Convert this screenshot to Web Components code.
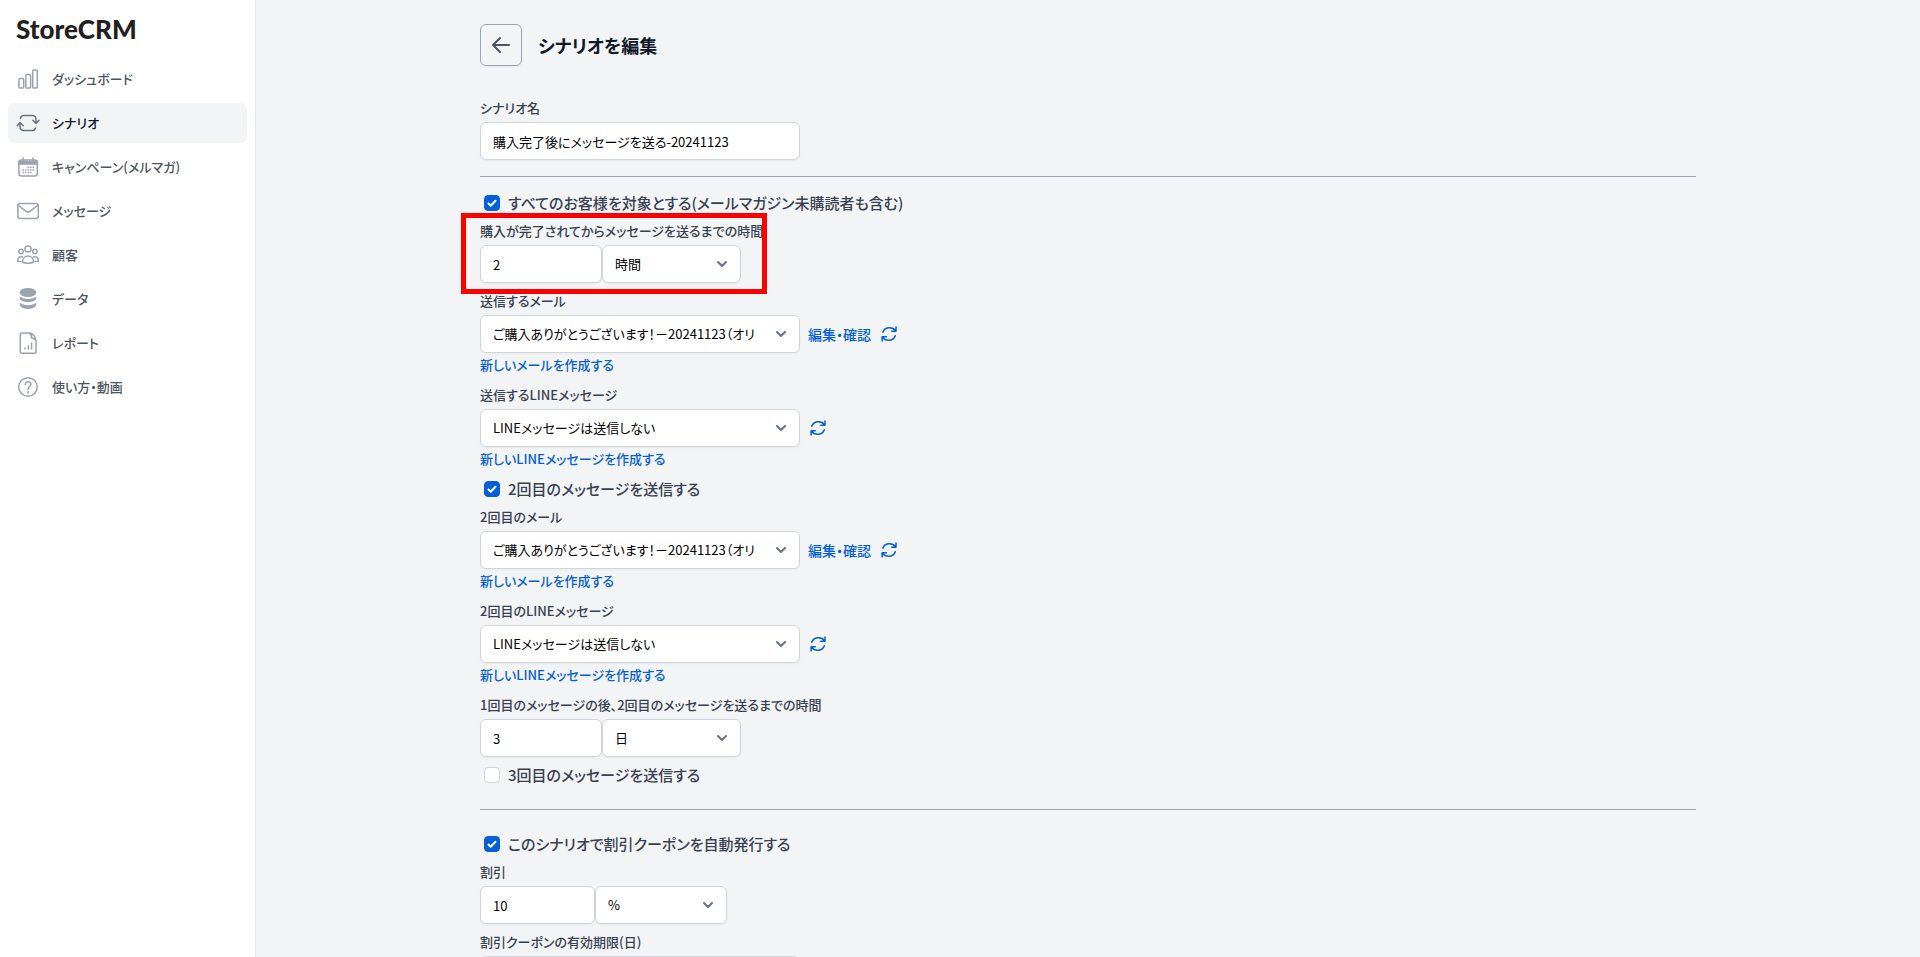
<!DOCTYPE html>
<html lang="ja">
<head>
<meta charset="utf-8">
<meta name="viewport" content="width=device-width, initial-scale=1">
<title>シナリオを編集 | StoreCRM</title>
<style>
  body {
    margin: 0;
    background: #f3f4f6;
    color: #374151;
    font-family: "Noto Sans CJK JP", sans-serif;
    font-size: 13px;
    line-height: 20px;
    font-feature-settings: "palt";
  }
</style>
</head>
<body>
<crm-app>
  <crm-sidebar slot="sidebar">
    <crm-nav-item icon="chart">ダッシュボード</crm-nav-item>
    <crm-nav-item icon="cycle" active>シナリオ</crm-nav-item>
    <crm-nav-item icon="calendar">キャンペーン(メルマガ)</crm-nav-item>
    <crm-nav-item icon="mail">メッセージ</crm-nav-item>
    <crm-nav-item icon="people">顧客</crm-nav-item>
    <crm-nav-item icon="data">データ</crm-nav-item>
    <crm-nav-item icon="report">レポート</crm-nav-item>
    <crm-nav-item icon="help">使い方・動画</crm-nav-item>
  </crm-sidebar>

  <crm-page-header>シナリオを編集</crm-page-header>
  <crm-section>
    <crm-text-field label="シナリオ名" value="購入完了後にメッセージを送る-20241123"></crm-text-field>
  </crm-section>
  <crm-section class="first">
    <crm-check label="すべてのお客様を対象とする(メールマガジン未購読者も含む)" checked></crm-check>
    <crm-highlight>
      <crm-amount-field label="購入が完了されてからメッセージを送るまでの時間" value="2" unit="時間"></crm-amount-field>
    </crm-highlight>
    <crm-message-field label="送信するメール" value="ご購入ありがとうございます！－20241123（オリ" edit="編集・確認" create="新しいメールを作成する"></crm-message-field>
    <crm-message-field label="送信するLINEメッセージ" value="LINEメッセージは送信しない" create="新しいLINEメッセージを作成する"></crm-message-field>
    <crm-check label="2回目のメッセージを送信する" checked></crm-check>
    <crm-message-field label="2回目のメール" value="ご購入ありがとうございます！－20241123（オリ" edit="編集・確認" create="新しいメールを作成する"></crm-message-field>
    <crm-message-field label="2回目のLINEメッセージ" value="LINEメッセージは送信しない" create="新しいLINEメッセージを作成する"></crm-message-field>
    <crm-amount-field label="1回目のメッセージの後、2回目のメッセージを送るまでの時間" value="3" unit="日"></crm-amount-field>
    <crm-check label="3回目のメッセージを送信する"></crm-check>
  </crm-section>
  <crm-section class="wide">
    <crm-check label="このシナリオで割引クーポンを自動発行する" checked></crm-check>
    <crm-amount-field class="narrow" label="割引" value="10" unit="%"></crm-amount-field>
    <crm-text-field label="割引クーポンの有効期限(日)" value=""></crm-text-field>
  </crm-section>
</crm-app>

<script>
const NAV_ICONS = {
  chart: '<rect x="2.9" y="11.5" width="4.8" height="9.6" rx="1.2"/><rect x="9.8" y="7.5" width="4.8" height="13.6" rx="1.2"/><rect x="16.7" y="2.9" width="4.6" height="18.2" rx="1.2"/>',
  cycle: '<path d="M4.5 7.5c.3-2 1.5-3 3.5-3h8c2.5 0 4 1.500 4 4v4M16.8 9.3l3.2 3.2 3-3.2M19.5 17c-.4 1.7-1.5 2.5-3.5 2.5H8c-2.5 0-4-1.500-4-4v-4M1.3 14.7 4 11.5l3.2 3.2"/>',
  calendar: '<rect x="2.9" y="5" width="18.4" height="16" rx="2.5"/><path fill="currentColor" d="M3 6.500h18.400V9H3zM7 3v3M17 3v3"/><path stroke-linecap="butt" stroke-width="1.500" stroke-dasharray="1.500 1" d="M11.500 12.300h6.500M6.500 14.900h11.500M6.500 17.500h9"/>',
  mail: '<rect x="1.9" y="4.5" width="20.4" height="15" rx="2"/><path d="m2 6 7.7 6.2c1.5 1.200 3.200 1.200 4.700 0L22 6"/>',
  people: '<circle cx="12" cy="6" r="3.1"/><circle cx="5.1" cy="8.5" r="2.2"/><circle cx="18.9" cy="8.5" r="2.2"/><path d="M6.5 19c0-3.600 2.300-5.900 5.500-5.900s5.500 2.300 5.500 5.900c-3 1.600-8 1.600-11 0zM6.300 14c-3-.8-4.700.8-4.700 4.200l3.400.2M17.700 14c3-.8 4.700.8 4.700 4.200l-3.400.2"/>',
  data: '<g fill="currentColor" stroke="none"><ellipse cx="12" cy="5.5" rx="8.3" ry="4.6"/><path d="M3.7 9.600c3.700 3.100 12.900 3.100 16.600 0 .8 3.500-3 5.700-8.300 5.700s-9.100-2.200-8.300-5.700zM3.700 15.800c3.700 3.100 12.900 3.100 16.600 0 .8 3.700-3 6.100-8.300 6.100s-9.100-2.400-8.300-6.100z"/></g>',
  report: '<path d="M6 2h8.500c3 1.400 5 4.400 5.500 8v11q0 1.200-1.200 1.200H5.500q-1.200 0-1.200-1.200V3.500Q4.300 2 6 2zM13 2c2 1 2.700 2.600 2.500 5 2.200-.1 3.700.9 4.500 3"/><path d="M9 18v-1M12.300 18v-3M15.600 18v-6"/>',
  help: '<circle cx="12" cy="12" r="9.3"/><path d="M9.300 9.500c.1-1.900 1.200-2.800 2.800-2.800 1.700 0 2.800 1 2.800 2.500 0 2.300-2.800 2.300-2.800 4.700v.5M12.100 16.600V18"/>'
};

const FIELD_STYLE = `
  :host { display: block; }
  label { display: block; margin-bottom: 4px; font-weight: 500; }
  input, select {
    box-sizing: border-box;
    width: 100%;
    height: 38px;
    margin: 0;
    padding: 0 12px;
    border: 1px solid #d1d5db;
    border-radius: 6px;
    background: #fff;
    color: #000;
    font: inherit;
    font-feature-settings: inherit;
    box-shadow: 0 1px 2px rgba(0, 0, 0, .05);
    appearance: none;
  }
  select { grid-area: 1 / 1; padding-right: 38px; }
  .select { display: grid; align-items: center; }
  .select svg {
    grid-area: 1 / 1;
    justify-self: end;
    margin-right: 9px;
    pointer-events: none;
  }
`;

const CHEVRON = `<svg width="20" height="20" viewBox="0 0 20 20" fill="none" stroke="#6b7280"
  stroke-width="2" stroke-linecap="round" stroke-linejoin="round" aria-hidden="true"><path d="m6 8 4 4 4-4"/></svg>`;

class CrmApp extends HTMLElement {
  constructor() {
    super();
    this.attachShadow({ mode: 'open' });
    this.shadowRoot.innerHTML = `
    <style>
      :host { display: flex; height: 100vh; }
      main { flex: 1; min-width: 0; overflow-y: auto; scrollbar-width: none; }
      .content { box-sizing: border-box; max-width: 1280px; margin: 0 auto; padding: 24px 32px; }
    </style>
    <slot name="sidebar"></slot>
    <main><div class="content"><slot></slot></div></main>
    `;
  }
}

class CrmSidebar extends HTMLElement {
  constructor() {
    super();
    this.attachShadow({ mode: 'open' });
    this.shadowRoot.innerHTML = `
    <style>
      :host {
        display: block;
        box-sizing: border-box;
        flex: none;
        width: 256px;
        padding: 14px 8px;
        border-right: 1px solid #e5e7eb;
        background: #fff;
      }
      .logo {
        padding: 0 8px;
        color: #231f20;
        font: 900 26px/30px Lato, sans-serif;
      }
      nav { display: grid; gap: 4px; margin-top: 15px; }
    </style>
    <div class="logo">StoreCRM</div>
    <nav><slot></slot></nav>
    `;
  }
}

class CrmNavItem extends HTMLElement {
  constructor() {
    super();
    this.attachShadow({ mode: 'open' });
  }

  connectedCallback() {
    this.shadowRoot.innerHTML = `
    <style>
      :host { display: block; color: #4b5563; }
      a {
        display: flex;
        align-items: center;
        gap: 12px;
        height: 40px;
        padding: 0 8px;
        border-radius: 6px;
        color: inherit;
        font-weight: 500;
        text-decoration: none;
      }
      svg { color: #9ca3af; }
      :host([active]) { color: #111827; }
      :host([active]) a { background: #f3f4f6; }
      :host([active]) svg { color: #6b7280; }
    </style>
    <a href="#">
      <svg width="24" height="24" viewBox="0 0 24 24" fill="none" stroke="currentColor" stroke-width="1.5"
        stroke-linecap="round" stroke-linejoin="round" aria-hidden="true">${NAV_ICONS[this.getAttribute('icon')]}</svg>
      <slot></slot>
    </a>
    `;
  }
}

class CrmPageHeader extends HTMLElement {
  constructor() {
    super();
    this.attachShadow({ mode: 'open' });
    this.shadowRoot.innerHTML = `
    <style>
      :host { display: flex; align-items: center; gap: 16px; margin-bottom: 32px; }
      button {
        display: grid;
        place-items: center;
        width: 42px;
        height: 42px;
        padding: 0;
        border: 1px solid #9ca3af;
        border-radius: 6px;
        background: transparent;
        color: #4b5563;
        box-shadow: 0 1px 2px rgba(0, 0, 0, .05);
      }
      h1 { margin: 0; color: #111827; font-size: 18px; line-height: 28px; font-weight: 600; }
    </style>
    <button type="button" aria-label="戻る">
      <svg width="24" height="24" viewBox="0 0 24 24" fill="none" stroke="currentColor" stroke-width="2"
        stroke-linecap="round" stroke-linejoin="round"><path d="M20 12H4m7-7-7 7 7 7"/></svg>
    </button>
    <h1><slot></slot></h1>
    `;
  }
}

class CrmSection extends HTMLElement {
  constructor() {
    super();
    this.attachShadow({ mode: 'open' });
    this.shadowRoot.innerHTML = `
    <style>
      :host { display: grid; gap: 8px; }
      :host(.first) { margin-top: 16px; padding-top: 16px; border-top: 1px solid #9ca3af; }
      :host(.wide) { margin-top: 24px; padding-top: 24px; border-top: 1px solid #9ca3af; }
    </style>
    <slot></slot>
    `;
  }
}

class CrmTextField extends HTMLElement {
  constructor() {
    super();
    this.attachShadow({ mode: 'open' });
  }

  connectedCallback() {
    this.shadowRoot.innerHTML = `
    <style>
      ${FIELD_STYLE}
      input { display: block; max-width: 320px; }
    </style>
    <label for="text">${this.getAttribute('label')}</label>
    <input id="text" type="text" value="${this.getAttribute('value')}">
    `;
  }
}

// number with a unit next to it
class CrmAmountField extends HTMLElement {
  constructor() {
    super();
    this.attachShadow({ mode: 'open' });
  }

  connectedCallback() {
    this.shadowRoot.innerHTML = `
    <style>
      ${FIELD_STYLE}
      .row { display: grid; grid-template-columns: 122px 139px; }
      :host(.narrow) .row { grid-template-columns: 115px 132px; }
    </style>
    <label for="amount">${this.getAttribute('label')}</label>
    <div class="row">
      <input id="amount" type="text" inputmode="numeric" value="${this.getAttribute('value')}">
      <div class="select">
        <select aria-label="単位"><option>${this.getAttribute('unit')}</option></select>
        ${CHEVRON}
      </div>
    </div>
    `;
  }
}

class CrmMessageField extends HTMLElement {
  constructor() {
    super();
    this.attachShadow({ mode: 'open' });
  }

  connectedCallback() {
    const edit = this.getAttribute('edit');
    this.shadowRoot.innerHTML = `
    <style>
      ${FIELD_STYLE}
      .row { display: flex; align-items: center; gap: 8px; }
      .select { width: 320px; }
      a { color: #0560d8; font-weight: 500; text-decoration: none; }
      .edit { font-size: 14px; }
      .create { display: block; width: fit-content; line-height: 24px; }
      button {
        display: grid;
        padding: 0;
        border: 0;
        background: none;
        color: #0560d8;
      }
    </style>
    <label for="message">${this.getAttribute('label')}</label>
    <div class="row">
      <div class="select">
        <select id="message"><option>${this.getAttribute('value')}</option></select>
        ${CHEVRON}
      </div>
      ${edit ? `<a class="edit" href="#">${edit}</a>` : ''}
      <button type="button" aria-label="更新">
        <svg width="20" height="20" viewBox="0 0 20 20" fill="none" stroke="currentColor" stroke-width="1.5"
          stroke-linecap="round" stroke-linejoin="round"><path d="M3.8 8.3c1.800-5.200 9-6.300 12.900-1.600M17 3v4.200h-4.200M16.300 11.700c-1.800 5.200-9 6.300-12.900 1.600M3.100 17v-4.200h4.200"/></svg>
      </button>
    </div>
    <a class="create" href="#">${this.getAttribute('create')}</a>
    `;
  }
}

class CrmCheck extends HTMLElement {
  constructor() {
    super();
    this.attachShadow({ mode: 'open' });
  }

  connectedCallback() {
    this.shadowRoot.innerHTML = `
    <style>
      :host { display: block; }
      label {
        display: flex;
        align-items: center;
        gap: 8px;
        width: fit-content;
        height: 20px;
        padding-left: 4px;
        font-size: 15px;
        font-weight: 500;
      }
      .box { display: grid; }
      input, svg { grid-area: 1 / 1; }
      input {
        box-sizing: border-box;
        width: 16px;
        height: 16px;
        margin: 0;
        border: 1px solid #d1d5db;
        border-radius: 4px;
        background: #fff;
        appearance: none;
      }
      input:checked { border-color: #0560d8; background: #0560d8; }
      svg { visibility: hidden; pointer-events: none; }
      input:checked + svg { visibility: visible; }
    </style>
    <label>
      <span class="box">
        <input type="checkbox" ${this.hasAttribute('checked') ? 'checked' : ''}>
        <svg width="16" height="16" viewBox="0 0 16 16" fill="none" stroke="#fff" stroke-width="2"
          stroke-linecap="round" stroke-linejoin="round"><path d="m4.5 8.5 2.200 2.200 4.800-5"/></svg>
      </span>
      <span>${this.getAttribute('label')}</span>
    </label>
    `;
  }
}

// red frame drawn over the surroundings of a field
class CrmHighlight extends HTMLElement {
  constructor() {
    super();
    this.attachShadow({ mode: 'open' });
    this.shadowRoot.innerHTML = `
    <style>
      :host { display: block; position: relative; width: 276px; white-space: nowrap; }
      .frame {
        position: absolute;
        inset: -8px -11px -11px -19px;
        border: 5px solid #f00;
        pointer-events: none;
      }
    </style>
    <slot></slot>
    <div class="frame"></div>
    `;
  }
}

customElements.define('crm-app', CrmApp);
customElements.define('crm-sidebar', CrmSidebar);
customElements.define('crm-nav-item', CrmNavItem);
customElements.define('crm-page-header', CrmPageHeader);
customElements.define('crm-section', CrmSection);
customElements.define('crm-text-field', CrmTextField);
customElements.define('crm-amount-field', CrmAmountField);
customElements.define('crm-message-field', CrmMessageField);
customElements.define('crm-check', CrmCheck);
customElements.define('crm-highlight', CrmHighlight);
</script>
</body>
</html>
